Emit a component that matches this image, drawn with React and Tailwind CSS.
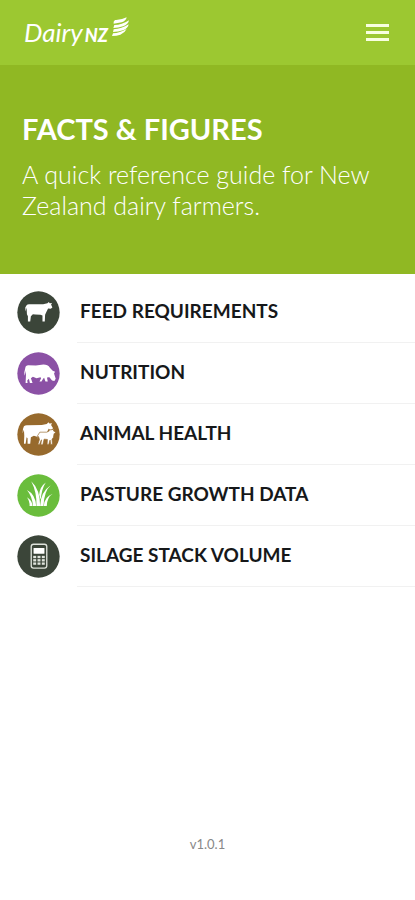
function CowIcon() {
  return (
    <svg viewBox="21 18 130 130" className="size-[43px]" fill="#fff" aria-hidden="true">
      <circle cx="86" cy="83" r="64" fill="#3b4539" />
      <path d="M50 61 Q53 57 60 58 L100 58 L113 55 L117 51 L120 55 L127 54 L124 59 L128 68 L123 72 L115 71 L109 83 L106 90 L105 110 L98 110 L98 92 L92 90 L76 89 L69 88 L63 94 L61 110 L54 110 L54 94 L51 88 L50 68 L47 80 L46 68 Z" />
    </svg>
  );
}

function GrazingCowIcon() {
  return (
    <svg viewBox="21 22 130 130" className="size-[43px]" fill="#fff" aria-hidden="true">
      <circle cx="86" cy="87" r="64" fill="#8b51a5" />
      <path d="M46 70 Q47 62 55 62 L78 63 L101 60 Q114 60 121 70 L129 79 L136 82 L133 87 L138 103 L134 110 L127 108 L119 98 L113 98 L112 101 L114 111 L107 111 L103 100 L100 103 L95 111 L89 111 L94 101 L92 98 L80 101 L69 97 L63 101 L68 116 L60 116 L57 103 L52 108 L53 116 L47 116 L48 94 L48 79 L44 94 L43 84 Z" />
    </svg>
  );
}

function CowAndCalfIcon() {
  return (
    <svg viewBox="21 25 130 130" className="size-[43px]" fill="#fff" aria-hidden="true">
      <circle cx="86" cy="90" r="64" fill="#976a2d" />
      <path d="M42 65 Q46 61 54 62 L96 61 L111 58 L116 53 L119 57 L127 56 L124 61 L130 71 L125 76 L115 76 L109 91 L106 97 L99 94 L87 98 L72 94 L63 98 L61 118 L53 118 L53 101 L50 98 L47 118 L42 118 L43 94 L42 76 L38 86 L39 73 Z" />
      <path d="M90 83 L111 83 L119 79 L116 74 L123 76 L133 74 L131 79 L138 83 L133 88 L131 99 L127 104 L128 120 L123 120 L121 107 L117 120 L112 120 L113 105 L103 104 L99 121 L93 121 L95 106 L89 120 L84 120 L89 105 L86 96 L84 104 L83 94 Z" stroke="#976a2d" strokeWidth="2" />
    </svg>
  );
}

function GrassIcon() {
  return (
    <svg viewBox="21 22 130 130" className="size-[43px]" fill="#fff" aria-hidden="true">
      <circle cx="86" cy="87" r="64" fill="#6abd3c" />
      <path d="M64 44 Q91 69 91 119 L80 119 Q81 76 64 44 Z" />
      <path d="M108 48 Q90 61 88 85 L93 100 Q95 68 108 48 Z" />
      <path d="M123 56 Q103 73 101 119 L91 119 Q92 76 123 56 Z" />
      <path d="M51 70 Q77 83 79 119 L69 119 Q68 90 51 70 Z" />
      <path d="M129 82 Q112 92 111 119 L102 119 Q104 91 129 82 Z" />
      <path d="M51 92 Q67 101 68 119 L59 119 Q60 104 51 92 Z" />
    </svg>
  );
}

function CalculatorIcon() {
  return (
    <svg viewBox="21 20 130 130" className="size-[43px]" aria-hidden="true">
      <circle cx="86" cy="85" r="64" fill="#3b4539" />
      <rect x="64" y="48" width="47" height="72" rx="7" fill="none" stroke="#dfe3dc" strokeWidth="4" />
      <rect x="71" y="59" width="33" height="18" rx="2" fill="#fff" />
      <g fill="#dfe3dc">
        <rect x="70" y="83" width="9" height="7" />
        <rect x="83" y="83" width="9" height="7" />
        <rect x="96" y="83" width="9" height="7" />
        <rect x="70" y="93" width="9" height="7" />
        <rect x="83" y="93" width="9" height="7" />
        <rect x="96" y="93" width="9" height="7" />
        <rect x="70" y="103" width="9" height="7" />
        <rect x="83" y="103" width="9" height="7" />
        <rect x="96" y="103" width="9" height="7" />
      </g>
    </svg>
  );
}

const sections = [
  { label: "FEED REQUIREMENTS", Icon: CowIcon },
  { label: "NUTRITION", Icon: GrazingCowIcon },
  { label: "ANIMAL HEALTH", Icon: CowAndCalfIcon },
  { label: "PASTURE GROWTH DATA", Icon: GrassIcon },
  { label: "SILAGE STACK VOLUME", Icon: CalculatorIcon },
];

function Logo() {
  return (
    <a href="#home" aria-label="DairyNZ" className="flex items-center gap-1 text-white italic">
      <span className="flex items-baseline gap-0.5">
        <span className="text-[26px] leading-8">Dairy</span>
        <span className="text-lg font-black">NZ</span>
      </span>
      <svg viewBox="338 52 54 58" className="mb-3 h-5 w-[18px]" fill="#fff" aria-hidden="true">
        <path d="M347 60 Q364 61 382 52 Q380 63 367 67 Q355 70 343 71 Q341 65 347 60 Z" />
        <path d="M345 75 Q368 75 389 61 Q387 73 371 79 Q357 84 342 84 Z" />
        <path d="M343 88 Q367 86 388 73 Q386 85 371 91 Q356 96 341 96 Z" />
        <path d="M341 100 Q361 99 382 87 Q376 99 363 104 Q352 108 338 108 Z" />
      </svg>
    </a>
  );
}

export default function App() {
  return (
    <div className="flex min-h-screen flex-col bg-white font-['Lato',sans-serif]">
      <header className="flex h-[65px] items-center justify-between bg-[#9cc831] px-6">
        <Logo />
        <button type="button" aria-label="Open menu" className="flex flex-col gap-1 px-0.5">
          <span className="h-[3px] w-[23px] bg-[#f8ffe0]" />
          <span className="h-[3px] w-[23px] bg-[#f8ffe0]" />
          <span className="h-[3px] w-[23px] bg-[#f8ffe0]" />
        </button>
      </header>
      <section className="bg-[#90b823] px-[22px] pt-12 pb-[53px] text-white">
        <h1 className="text-[29px] leading-8 font-bold">FACTS &amp; FIGURES</h1>
        <p className="mt-3.5 text-[25px] leading-[31px] font-light">
          A quick reference guide for New Zealand dairy farmers.
        </p>
      </section>
      <main className="flex-1 pt-2">
        <ul>
          {sections.map(({ label, Icon }) => (
            <li key={label}>
              <a href="#section" className="flex items-center pl-[17px]">
                <Icon />
                <span className="ml-[17px] flex h-[61px] flex-1 items-center border-b border-[#f1f1f1] pb-0.5 pl-[3px] text-[19px] font-bold text-[#16181a]">
                  {label}
                </span>
              </a>
            </li>
          ))}
        </ul>
      </main>
      <footer className="pb-11 text-center text-[13px] leading-6 text-[#888888]">v1.0.1</footer>
    </div>
  );
}
